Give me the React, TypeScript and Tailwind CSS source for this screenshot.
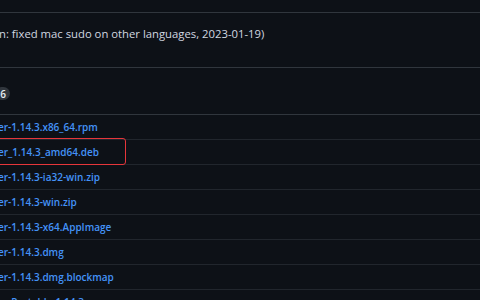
import React from "react";

const assets = [
  "er-1.14.3.x86_64.rpm",
  "er_1.14.3_amd64.deb",
  "er-1.14.3-ia32-win.zip",
  "er-1.14.3-win.zip",
  "er-1.14.3-x64.AppImage",
  "er-1.14.3.dmg",
  "er-1.14.3.dmg.blockmap",
  "er-Portable-1.14.3",
];

export default function App() {
  return (
    <div className="w-[480px] h-[300px] overflow-hidden bg-[#0d1117] font-['Open_Sans',sans-serif]">
      <div className="h-[12px]" />
      <div className="border-t border-[#30363d] h-[55px] pt-[14px]">
        <p className="-ml-[1px] text-[11.3px] leading-[14px] text-[#d1d7e0] whitespace-nowrap">
          n: fixed mac sudo on other languages, 2023-01-19)
        </p>
      </div>
      <div className="border-t border-[#30363d] h-[47px] pt-[19px]">
        <span className="-ml-[5px] w-[15px] h-[13px] rounded-full bg-[#30363d] text-[#e6edf3] text-[10px] leading-none font-semibold flex items-center justify-end pr-[4px]">
          6
        </span>
      </div>
      <ul className="border-t border-[#30363d]">
        {assets.map((name, i) => (
          <li
            key={name}
            className="relative h-[25px] border-b border-[#21262d] flex items-center"
          >
            <span className="-ml-[2px] text-[10px] font-semibold text-[#4493f8] whitespace-nowrap">
              {name}
            </span>
            {i === 1 && (
              <span className="absolute -left-[8px] -top-[2px] w-[134px] h-[27px] border-[1.5px] border-[#e5363b] rounded-[3px]" />
            )}
          </li>
        ))}
      </ul>
    </div>
  );
}
